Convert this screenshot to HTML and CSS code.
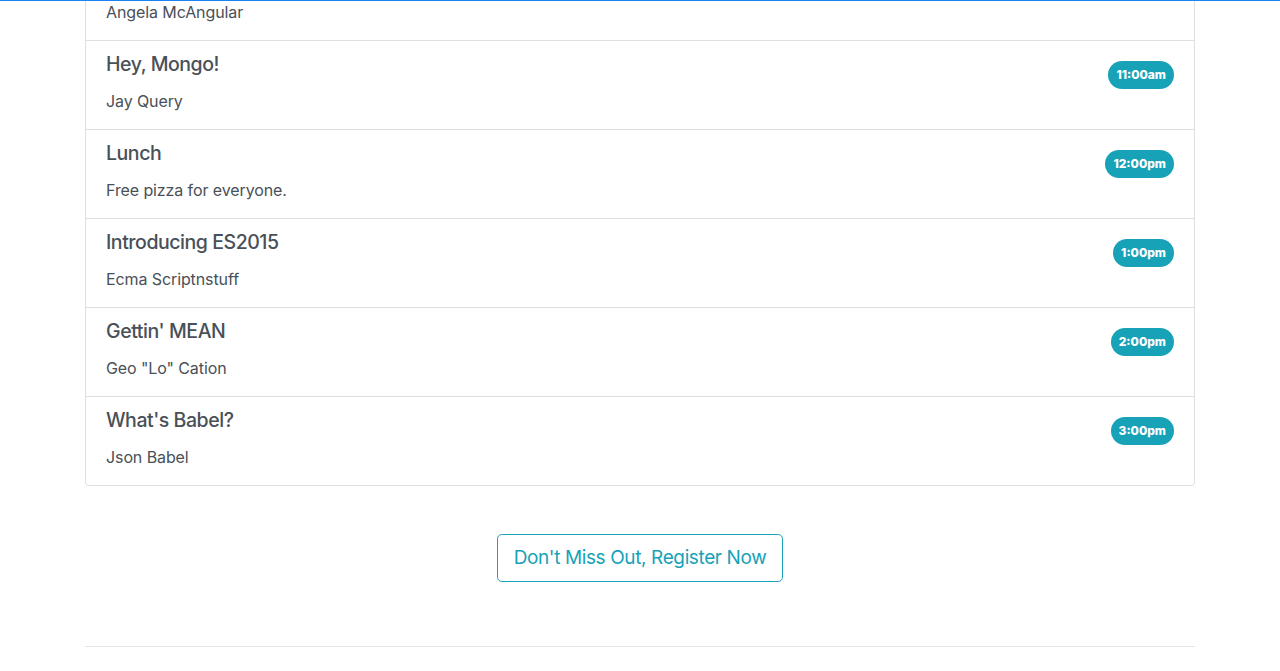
FILE: index.html
```html
<!DOCTYPE html>
<html lang="en">
<head>
<meta charset="utf-8">
<title>Schedule</title>
<link rel="stylesheet" href="styles.css">
</head>
<body>
<div class="topline"></div>
<main class="container">
  <ul class="schedule">
    <li class="item">
      <div class="item-text">
        <h5 class="title">Angular Everywhere</h5>
        <p class="speaker">Angela McAngular</p>
      </div>
      <span class="badge">10:00am</span>
    </li>
    <li class="item">
      <div class="item-text">
        <h5 class="title">Hey, Mongo!</h5>
        <p class="speaker">Jay Query</p>
      </div>
      <span class="badge">11:00am</span>
    </li>
    <li class="item">
      <div class="item-text">
        <h5 class="title">Lunch</h5>
        <p class="speaker">Free pizza for everyone.</p>
      </div>
      <span class="badge">12:00pm</span>
    </li>
    <li class="item">
      <div class="item-text">
        <h5 class="title">Introducing ES2015</h5>
        <p class="speaker">Ecma Scriptnstuff</p>
      </div>
      <span class="badge">1:00pm</span>
    </li>
    <li class="item">
      <div class="item-text">
        <h5 class="title">Gettin' MEAN</h5>
        <p class="speaker">Geo "Lo" Cation</p>
      </div>
      <span class="badge">2:00pm</span>
    </li>
    <li class="item">
      <div class="item-text">
        <h5 class="title">What's Babel?</h5>
        <p class="speaker">Json Babel</p>
      </div>
      <span class="badge">3:00pm</span>
    </li>
  </ul>
  <div class="cta">
    <a class="btn-register" href="#">Don't Miss Out, Register Now</a>
  </div>
  <hr class="divider">
</main>
</body>
</html>
```

FILE: styles.css
```css
* { box-sizing: border-box; }

html, body {
  margin: 0;
  padding: 0;
  background: #fff;
}

body {
  font-family: Inter, "Noto Sans", "Liberation Sans", sans-serif;
  font-size: 16px;
  line-height: 1.5;
  color: #495057;
}

.topline {
  position: fixed;
  top: 0;
  left: 0;
  right: 0;
  height: 1px;
  background: #1a84f5;
  z-index: 10;
}

.container {
  width: 1110px;
  margin: -49px auto 0;
}

.schedule {
  list-style: none;
  margin: 0;
  padding: 0;
  display: flex;
  flex-direction: column;
}

.item {
  display: flex;
  justify-content: space-between;
  align-items: flex-start;
  padding: 12px 20px;
  border: 1px solid #dfdfdf;
  margin-bottom: -1px;
  background: #fff;
}

.item:first-child {
  border-top-left-radius: 4px;
  border-top-right-radius: 4px;
}

.item:last-child {
  margin-bottom: 0;
  border-bottom-left-radius: 4px;
  border-bottom-right-radius: 4px;
}

.title {
  margin: 0 0 12px;
  font-size: 19.5px;
  font-weight: 500;
  line-height: 23px;
  padding-bottom: 1px;
  letter-spacing: -0.45px;
}

.speaker {
  margin: 0 0 4px;
  font-size: 16px;
  line-height: 24px;
  letter-spacing: -0.1px;
}

.badge {
  margin-top: 8px;
  display: inline-block;
  padding: 8px 8px;
  font-family: Inter, "Liberation Sans", Arial, sans-serif;
  font-size: 12px;
  font-weight: 800;
  line-height: 12px;
  color: #fff;
  background: #17a2b8;
  border-radius: 14px;
  white-space: nowrap;
}

.cta {
  display: flex;
  justify-content: center;
  padding-top: 48px;
}

.btn-register {
  display: inline-block;
  padding: 8px 16px;
  font-size: 19px;
  line-height: 30px;
  letter-spacing: -0.38px;
  color: #17a2b8;
  border: 1px solid #17a2b8;
  border-radius: 4.8px;
  text-decoration: none;
}

.divider {
  margin: 64px 0 0;
  border: 0;
  border-top: 1px solid #e5e5e5;
}
```
